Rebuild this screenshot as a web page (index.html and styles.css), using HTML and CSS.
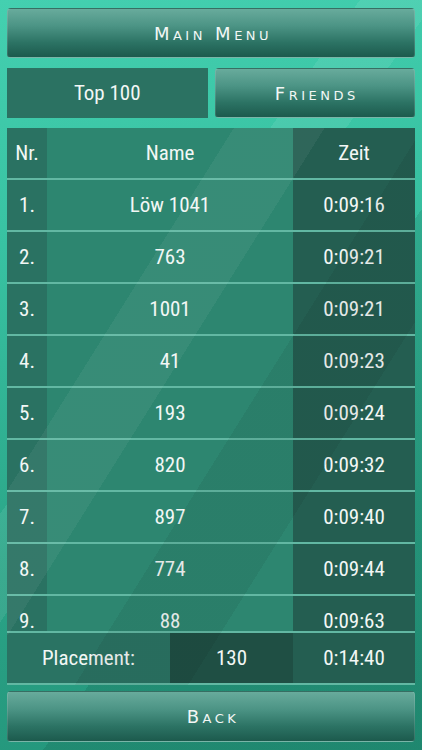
FILE: index.html
```html
<!DOCTYPE html>
<html lang="en">
<head>
    <meta charset="UTF-8">
    <meta name="viewport" content="width=device-width, initial-scale=1.0">
    <title>Highscores</title>
    <link rel="stylesheet" href="styles.css">
</head>
<body>
    <div class="screen">
        <button class="menu-btn">Main Menu</button>

        <div class="tabs">
            <div class="tab tab-active">Top 100</div>
            <button class="menu-btn">Friends</button>
        </div>

        <div class="board">
            <div class="board-row board-head">
                <div class="cell cell-nr">Nr.</div>
                <div class="cell cell-name">Name</div>
                <div class="cell cell-time">Zeit</div>
            </div>

            <!-- scrolling list, last row is cut off -->
            <div class="board-list">
                <div class="board-row"><div class="cell cell-nr">1.</div><div class="cell cell-name">Löw 1041</div><div class="cell cell-time">0:09:16</div></div>
                <div class="board-row"><div class="cell cell-nr">2.</div><div class="cell cell-name">763</div><div class="cell cell-time">0:09:21</div></div>
                <div class="board-row"><div class="cell cell-nr">3.</div><div class="cell cell-name">1001</div><div class="cell cell-time">0:09:21</div></div>
                <div class="board-row"><div class="cell cell-nr">4.</div><div class="cell cell-name">41</div><div class="cell cell-time">0:09:23</div></div>
                <div class="board-row"><div class="cell cell-nr">5.</div><div class="cell cell-name">193</div><div class="cell cell-time">0:09:24</div></div>
                <div class="board-row"><div class="cell cell-nr">6.</div><div class="cell cell-name">820</div><div class="cell cell-time">0:09:32</div></div>
                <div class="board-row"><div class="cell cell-nr">7.</div><div class="cell cell-name">897</div><div class="cell cell-time">0:09:40</div></div>
                <div class="board-row"><div class="cell cell-nr">8.</div><div class="cell cell-name">774</div><div class="cell cell-time">0:09:44</div></div>
                <div class="board-row"><div class="cell cell-nr">9.</div><div class="cell cell-name">88</div><div class="cell cell-time">0:09:63</div></div>
            </div>

            <div class="board-row board-own">
                <div class="cell cell-place">Placement:</div>
                <div class="cell cell-rank">130</div>
                <div class="cell cell-time">0:14:40</div>
            </div>
        </div>

        <button class="menu-btn back-btn">Back</button>
    </div>
</body>
</html>
```

FILE: styles.css
```css
* {
    box-sizing: border-box;
}

body {
    margin: 0;
    padding: 0;
    background-color: #2fae90;
    background-image:
        linear-gradient(125deg, rgba(255, 255, 255, 0) 38%, rgba(255, 255, 255, 0.08) 38%, rgba(255, 255, 255, 0.08) 46%, rgba(255, 255, 255, 0) 46%),
        linear-gradient(125deg, rgba(0, 0, 0, 0) 60%, rgba(0, 40, 30, 0.12) 60%),
        linear-gradient(170deg, #44d0b0 0%, #38c2a2 30%, #2aa386 70%, #23947a 100%);
    font-family: "Liberation Sans Narrow", "Roboto Condensed", "DejaVu Sans Condensed", "Liberation Sans", sans-serif;
    color: #f2f7f5;
    width: 422px;
    height: 750px;
    overflow: hidden;
}

.screen {
    padding: 8px 7px;
    display: flex;
    flex-direction: column;
}

.menu-btn {
    display: block;
    width: 100%;
    height: 50px;
    border: 1px solid rgba(255, 255, 255, 0.12);
    border-radius: 4px;
    background: linear-gradient(180deg, #68ab9c 0%, #4c9485 35%, #2c7364 70%, #1c5a4d 100%);
    color: #f2f7f5;
    font-family: "DejaVu Sans", "Liberation Sans", sans-serif;
    font-variant: small-caps;
    font-size: 18px;
    letter-spacing: 3.5px;
    cursor: pointer;
    padding: 0 0 0 4px;
}

.tabs {
    display: grid;
    grid-template-columns: 1fr 1fr;
    gap: 7px;
    margin-top: 10px;
}

.tab {
    height: 50px;
    display: flex;
    align-items: center;
    justify-content: center;
    background-color: #2b7262;
    font-size: 21px;
}

.board {
    margin-top: 10px;
    position: relative;
}

.board::after {
    content: "";
    position: absolute;
    inset: 0;
    pointer-events: none;
    background-image:
        linear-gradient(122deg, rgba(255, 255, 255, 0) 30%, rgba(255, 255, 255, 0.05) 30%, rgba(255, 255, 255, 0.05) 42%, rgba(255, 255, 255, 0) 42%),
        linear-gradient(122deg, rgba(0, 0, 0, 0) 55%, rgba(0, 0, 0, 0.06) 55%, rgba(0, 0, 0, 0.06) 70%, rgba(0, 0, 0, 0) 70%);
}

.board-row {
    display: flex;
    height: 52px;
    border-bottom: 2px solid #62b8a3;
}

.board-list {
    height: 451px;
    overflow: hidden;
}

.board-own {
    height: 54px;
    border-top: 2px solid #62b8a3;
}

.cell {
    display: flex;
    align-items: center;
    justify-content: center;
    font-size: 21px;
}

.cell-nr {
    width: 40px;
    background-color: #2a7262;
}

.cell-name {
    flex: 1;
    background-color: #2d8670;
}

.cell-time {
    width: 122px;
    background-color: #245e51;
}

.cell-place {
    width: 163px;
    background-color: #2a7363;
}

.cell-rank {
    flex: 1;
    background-color: #1f4f44;
}

.back-btn {
    margin-top: 6px;
    height: 51px;
}
```
